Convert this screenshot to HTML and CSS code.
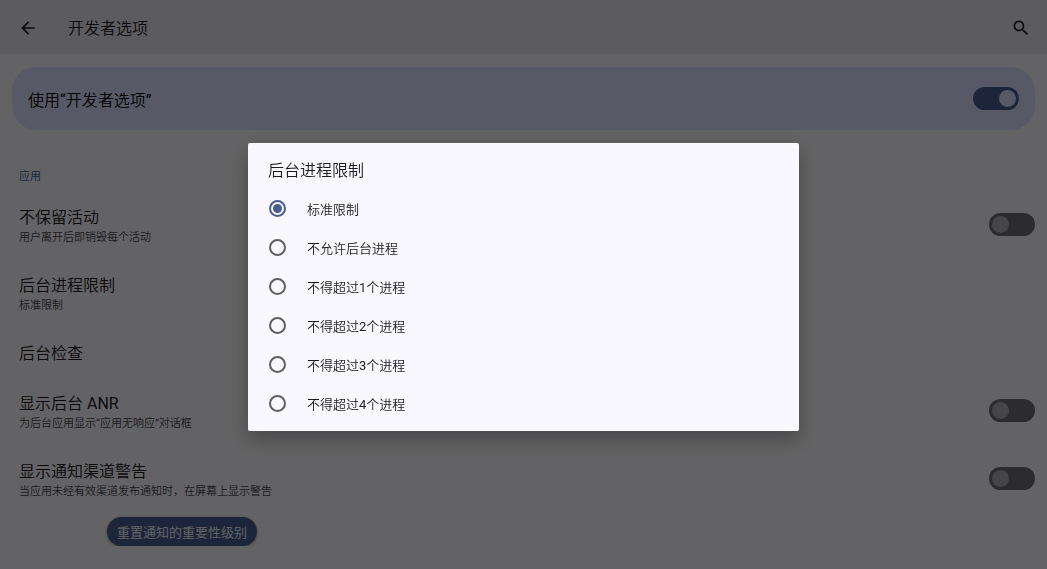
FILE: index.html
```html
<!DOCTYPE html>
<html lang="zh-CN">
<head>
  <meta charset="UTF-8">
  <meta name="viewport" content="width=device-width, initial-scale=1">
  <title>开发者选项</title>
  <link rel="stylesheet" href="styles.css">
</head>
<body>
  <header class="app-bar">
    <button type="button" class="icon-button" aria-label="返回">
      <svg viewBox="0 0 24 24"><path d="M20 11H7.83l5.59-5.59L12 4l-8 8 8 8 1.41-1.41L7.83 13H20v-2z"/></svg>
    </button>
    <h1>开发者选项</h1>
    <button type="button" class="icon-button" aria-label="搜索">
      <svg viewBox="0 0 24 24"><path d="M15.5 14h-.79l-.28-.27C15.41 12.59 16 11.11 16 9.5 16 5.91 13.09 3 9.5 3S3 5.91 3 9.5 5.91 16 9.5 16c1.61 0 3.09-.59 4.23-1.57l.27.28v.79l5 4.99L20.49 19l-4.99-5zm-6 0C7.01 14 5 11.99 5 9.5S7.01 5 9.5 5 14 7.01 14 9.5 11.99 14 9.5 14z"/></svg>
    </button>
  </header>

  <main>
    <div class="main-switch">
      <label for="useOptions">使用“开发者选项”</label>
      <input type="checkbox" class="switch" id="useOptions" checked>
    </div>

    <h2>应用</h2>

    <div class="row">
      <label class="text" for="keepActivities">
        <span class="title">不保留活动</span>
        <span class="summary">用户离开后即销毁每个活动</span>
      </label>
      <input type="checkbox" class="switch" id="keepActivities">
    </div>
    <a class="row" href="#limit">
      <span class="text">
        <span class="title">后台进程限制</span>
        <span class="summary">标准限制</span>
      </span>
    </a>
    <a class="row" href="#check">
      <span class="text">
        <span class="title">后台检查</span>
      </span>
    </a>
    <div class="row">
      <label class="text" for="showAnr">
        <span class="title">显示后台 ANR</span>
        <span class="summary">为后台应用显示“应用无响应”对话框</span>
      </label>
      <input type="checkbox" class="switch" id="showAnr">
    </div>
    <div class="row">
      <label class="text" for="channelWarnings">
        <span class="title">显示通知渠道警告</span>
        <span class="summary">当应用未经有效渠道发布通知时，在屏幕上显示警告</span>
      </label>
      <input type="checkbox" class="switch" id="channelWarnings">
    </div>
    <button type="button" class="reset-button">重置通知的重要性级别</button>
  </main>

  <!-- Process limit dialog -->
  <div class="scrim">
    <form class="dialog" id="limit" role="dialog" aria-labelledby="limitTitle">
      <h2 id="limitTitle">后台进程限制</h2>
      <div class="options">
        <label><input type="radio" name="limit" value="standard" checked>标准限制</label>
        <label><input type="radio" name="limit" value="0">不允许后台进程</label>
        <label><input type="radio" name="limit" value="1">不得超过1个进程</label>
        <label><input type="radio" name="limit" value="2">不得超过2个进程</label>
        <label><input type="radio" name="limit" value="3">不得超过3个进程</label>
        <label><input type="radio" name="limit" value="4">不得超过4个进程</label>
      </div>
    </form>
  </div>
</body>
</html>
```
FILE: styles.css
```css
* {
  box-sizing: border-box;
}
body {
  margin: 0;
  background-color: #f7f6fa;
  color: #1a1b21;
  font-family: Roboto, "Noto Sans CJK SC DemiLight", "Noto Sans CJK SC", sans-serif;
  font-size: 13px;
}
h1, h2 {
  margin: 0;
  font-size: 16px;
  font-weight: normal;
}
button {
  border: none;
  font: inherit;
  cursor: pointer;
}

/* App bar */
.app-bar {
  display: flex;
  align-items: center;
  height: 54px;
  padding: 0 16px 0 18px;
  background-color: #e7e6ea;
}
.app-bar h1 {
  flex: 1;
  margin-left: 30px;
}
.icon-button {
  display: flex;
  padding: 2px 0 0;
  background: none;
}
.icon-button svg {
  width: 20px;
  height: 20px;
  fill: #1a1b21;
}

/* Settings list */
.main-switch {
  display: flex;
  align-items: center;
  justify-content: space-between;
  height: 63px;
  margin: 13px 12px 0;
  padding: 0 16px;
  border-radius: 24px;
  background-color: #dae2ff;
  color: #000;
  font-size: 16px;
}
main h2 {
  margin: 38px 19px 4px;
  color: #405aa0;
  font-size: 11px;
  line-height: 18px;
}
.row {
  display: flex;
  align-items: center;
  justify-content: space-between;
  padding: 11px 12px 11px 19px;
  color: inherit;
  text-decoration: none;
}
.text {
  padding-top: 6px;
}
.title, .summary {
  display: block;
}
.title {
  font-size: 16px;
  line-height: 22px;
}
.summary {
  color: #45464f;
  font-size: 11px;
  line-height: 18px;
}
.switch {
  appearance: none;
  width: 46px;
  height: 23px;
  margin: 0;
  padding: 3px;
  border-radius: 12px;
  background-color: #6e6d75;
}
.switch::before {
  content: "";
  display: block;
  width: 17px;
  height: 17px;
  border-radius: 50%;
  background-color: #aeacb4;
}
.switch:checked {
  background-color: #485d92;
}
.switch:checked::before {
  margin-left: auto;
  background-color: #dae2ff;
}
.reset-button {
  display: block;
  height: 29px;
  margin: 5px 0 0 107px;
  padding: 0 10px;
  border-radius: 15px;
  background-color: #485d92;
  color: #fff;
  box-shadow: 0 1px 3px rgba(0, 0, 0, 0.4);
}

/* Dialog */
.scrim {
  position: fixed;
  inset: 0;
  display: flex;
  align-items: center;
  justify-content: center;
  padding: 4px 24px 0;
  background-color: rgba(0, 0, 0, 0.6);
}
.dialog {
  width: 100%;
  max-width: 551px;
  padding: 16px 0 8px;
  border-radius: 2px;
  background-color: #faf8ff;
  box-shadow: 0 8px 20px rgba(0, 0, 0, 0.3);
}
.dialog h2 {
  padding: 0 20px 6px;
  line-height: 24px;
}
.options label {
  display: flex;
  align-items: center;
  gap: 21px;
  height: 39px;
  padding: 0 21px;
}
.options input {
  appearance: none;
  width: 17px;
  height: 17px;
  margin: 0;
  padding: 2px;
  border: 2px solid #5f5e64;
  border-radius: 50%;
}
.options input:checked {
  border-color: #485d92;
  background: #485d92 content-box;
}
```
